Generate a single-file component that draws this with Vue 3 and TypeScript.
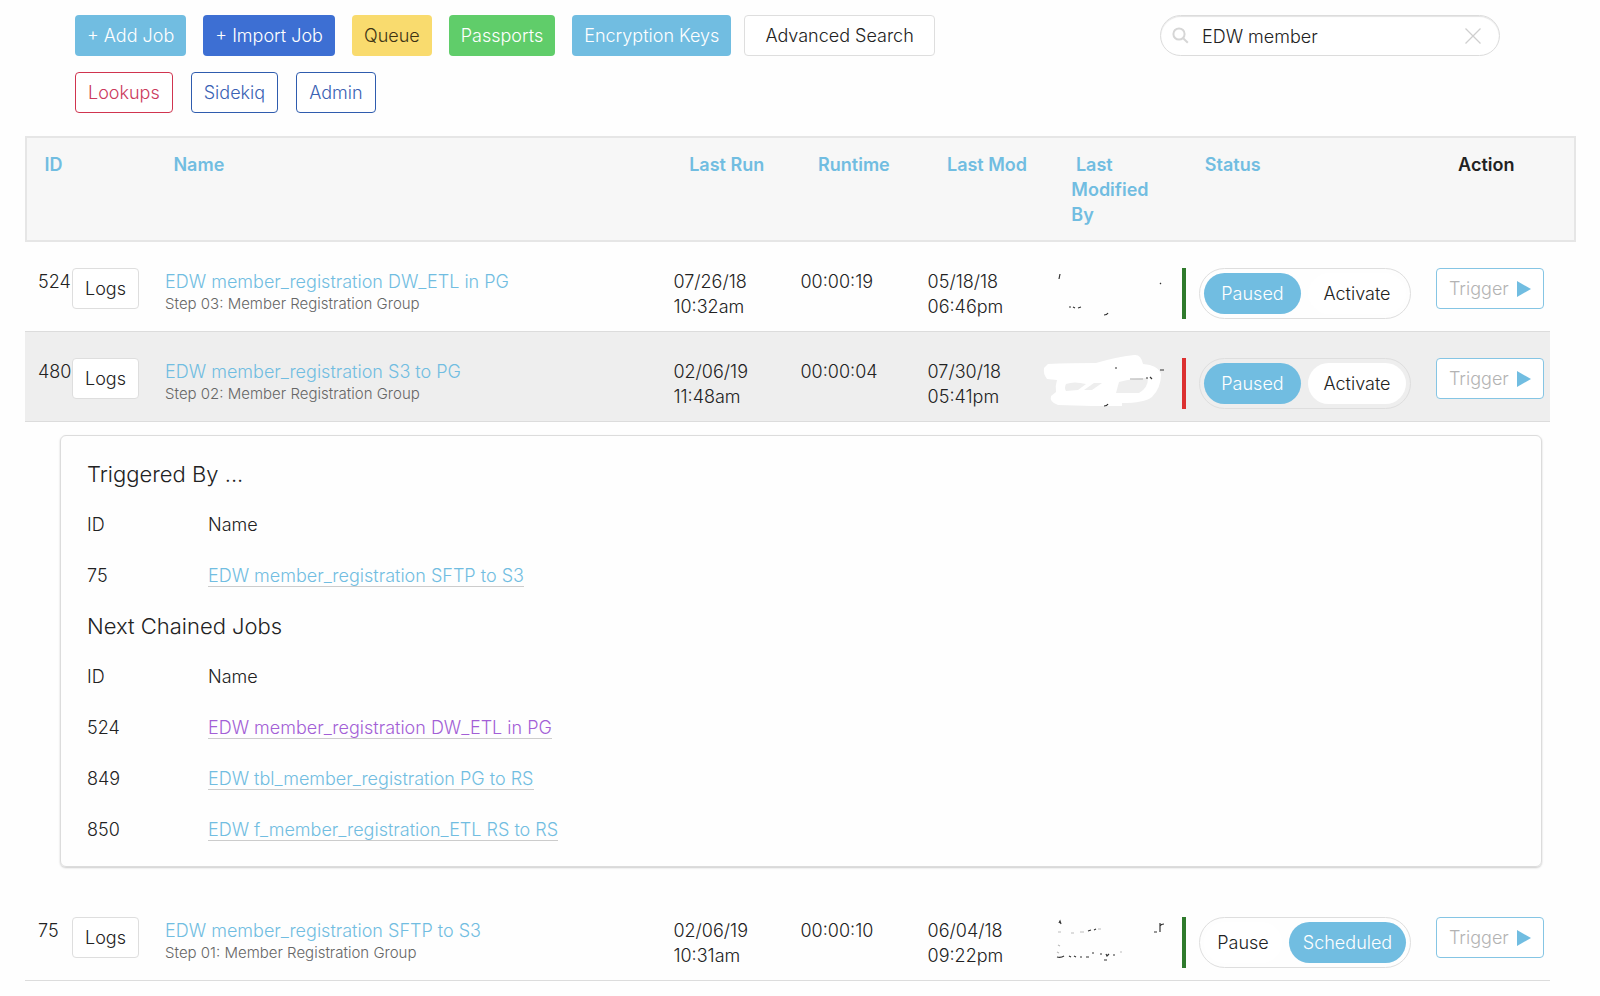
<script setup lang="ts">
import { ref } from 'vue'

interface ToggleOption {
  label: string
  active: boolean
}

interface Job {
  id: number
  name: string
  step: string
  lastRun: [string, string]
  runtime: string
  lastMod: [string, string]
  healthy: boolean
  options: ToggleOption[]
  even: boolean
  expanded: boolean
}

interface LinkedJob {
  id: number
  name: string
  visited?: boolean
}

const query = ref('EDW member')

const primaryActions = [
  { label: '+ Add Job', kind: 'sky' },
  { label: '+ Import Job', kind: 'blue' },
  { label: 'Queue', kind: 'yellow' },
  { label: 'Passports', kind: 'green' },
  { label: 'Encryption Keys', kind: 'sky' },
]

const secondaryActions = [
  { label: 'Lookups', kind: 'outline-red' },
  { label: 'Sidekiq', kind: 'outline-blue' },
  { label: 'Admin', kind: 'outline-blue' },
]

const columns = [
  { label: 'ID', span: 'span-1' },
  { label: 'Name', span: 'span-4' },
  { label: 'Last Run', span: 'span-1' },
  { label: 'Runtime', span: 'span-1' },
  { label: 'Last Mod', span: 'span-1' },
  { label: 'Last Modified By', span: 'span-1' },
  { label: 'Status', span: 'span-2' },
]

const jobs = ref<Job[]>([
  {
    id: 524,
    name: 'EDW member_registration DW_ETL in PG',
    step: 'Step 03: Member Registration Group',
    lastRun: ['07/26/18', '10:32am'],
    runtime: '00:00:19',
    lastMod: ['05/18/18', '06:46pm'],
    healthy: true,
    options: [{ label: 'Paused', active: true }, { label: 'Activate', active: false }],
    even: true,
    expanded: false,
  },
  {
    id: 480,
    name: 'EDW member_registration S3 to PG',
    step: 'Step 02: Member Registration Group',
    lastRun: ['02/06/19', '11:48am'],
    runtime: '00:00:04',
    lastMod: ['07/30/18', '05:41pm'],
    healthy: false,
    options: [{ label: 'Paused', active: true }, { label: 'Activate', active: false }],
    even: true,
    expanded: true,
  },
  {
    id: 75,
    name: 'EDW member_registration SFTP to S3',
    step: 'Step 01: Member Registration Group',
    lastRun: ['02/06/19', '10:31am'],
    runtime: '00:00:10',
    lastMod: ['06/04/18', '09:22pm'],
    healthy: true,
    options: [{ label: 'Pause', active: false }, { label: 'Scheduled', active: true }],
    even: false,
    expanded: false,
  },
])

const groups: { title: string; jobs: LinkedJob[] }[] = [
  { title: 'Triggered By ...', jobs: [{ id: 75, name: 'EDW member_registration SFTP to S3' }] },
  {
    title: 'Next Chained Jobs',
    jobs: [
      { id: 524, name: 'EDW member_registration DW_ETL in PG', visited: true },
      { id: 849, name: 'EDW tbl_member_registration PG to RS' },
      { id: 850, name: 'EDW f_member_registration_ETL RS to RS' },
    ],
  },
]
</script>

<template>
  <main class="page">
    <header class="toolbar">
      <nav class="actions" aria-label="Job tools">
        <div class="action-row">
          <div class="primary-group">
            <button v-for="a in primaryActions" :key="a.label" type="button" class="btn filled" :class="a.kind">{{ a.label }}</button>
          </div>
          <button type="button" class="btn plain wide">Advanced Search</button>
        </div>
        <div class="secondary-group">
          <button v-for="a in secondaryActions" :key="a.label" type="button" class="btn" :class="a.kind">{{ a.label }}</button>
        </div>
      </nav>
      <form class="search" role="search" @submit.prevent>
        <svg class="glass" viewBox="0 0 17 17" aria-hidden="true">
          <circle cx="7" cy="7" r="5.6" />
          <path d="M11.2 11.2 L15.8 15.8" />
        </svg>
        <input v-model="query" type="text" aria-label="Search jobs" />
        <button type="button" class="clear" aria-label="Clear search" @click="query = ''">
          <svg viewBox="0 0 16 16" aria-hidden="true"><path d="M0.5 0.5 L15.5 15.5 M15.5 0.5 L0.5 15.5" /></svg>
        </button>
      </form>
    </header>

    <table class="jobs">
      <thead>
        <tr>
          <th v-for="c in columns" :key="c.label" scope="col" :class="c.span"><a href="#">{{ c.label }}</a></th>
          <th scope="col">Action</th>
        </tr>
      </thead>
      <tbody>
        <template v-for="(job, i) in jobs" :key="job.id">
          <tr class="job" :class="{ selected: job.expanded }">
            <td class="id-cell"><span class="job-id">{{ job.id }}</span><button type="button" class="btn plain logs">Logs</button></td>
            <td class="span-4 text-cell name-cell">
              <a href="#">{{ job.name }}</a>
              <small>{{ job.step }}</small>
            </td>
            <td class="text-cell">{{ job.lastRun[0] }}<br />{{ job.lastRun[1] }}</td>
            <td class="text-cell">{{ job.runtime }}</td>
            <td class="text-cell">{{ job.lastMod[0] }}<br />{{ job.lastMod[1] }}</td>
            <td class="author">
              <svg v-if="i === 0" viewBox="0 0 130 60" aria-hidden="true">
                <path class="ink" d="M20 12 L19 17 M120 21 L121 22 M29 45 L31 45 M33 45 L35 46 M38 46 L41 45 M64 53 Q67 53 68 51" />
              </svg>
              <svg v-else-if="i === 1" viewBox="0 0 130 60" aria-hidden="true">
                <path
                  class="mask"
                  d="M8 12 Q30 11 56 11 Q76 5 94 3 Q101 2 103 12 Q118 13 121 22 Q121 36 112 45 Q104 51 82 51 L82 54 L52 54 L18 53 Q9 50 11 44 L16 40 Q15 34 17 28 L7 27 Q3 22 4 16 Z M26 32 Q34 29 46 32 L38 38 L26 39 Q24 36 26 32 Z M44 38 L54 31 L62 31 L52 38 Z M79 30 Q94 26 108 26 Q108 36 99 41 L76 41 Z"
                />
                <path class="ink" d="M75 16 L77 16 M106 26 L108 26 M110 25 L112 27 M120 18 L124 18 M64 54 Q67 54 68 52" />
                <path class="ink faint" d="M90 27 L103 27" />
              </svg>
              <svg v-else viewBox="0 0 130 60" aria-hidden="true">
                <path class="ink" d="M19 12 L20 10 L21 13 M48 20 L51 19 M54 19 L56 18 M114 21 L117 21 M120 12 L120 21 M120 15 Q121 13 124 13 M17 46 Q21 47 24 45 M29 45 L31 46 M34 45 L36 46 M40 46 L42 46 M46 46 L49 46 M52 42 L54 42 M60 43 L62 43 M66 43 L67 45 L69 43 M64 49 L67 49 M73 44 L75 44" />
                <path class="ink faint" d="M18 21 L21 21 M31 22 L34 22 M40 21 L44 21 M58 18 L61 18 M18 34 L20 35 M17 41 L19 42 M80 41 L82 41" />
              </svg>
            </td>
            <td class="span-2 status">
              <span class="bar" :class="job.healthy ? 'ok' : 'bad'"></span>
              <div class="toggle" :class="{ even: job.even }" role="group" aria-label="Job state">
                <button v-for="o in job.options" :key="o.label" type="button" :class="{ on: o.active }" :aria-pressed="o.active">{{ o.label }}</button>
              </div>
            </td>
            <td class="trigger-cell">
              <button type="button" class="btn trigger">
                Trigger
                <svg viewBox="0 0 14 16" aria-hidden="true"><path d="M0 0 L14 8 L0 16 Z" /></svg>
              </button>
            </td>
          </tr>
          <tr v-if="job.expanded" class="detail">
            <td>
              <section v-for="g in groups" :key="g.title">
                <h2>{{ g.title }}</h2>
                <table class="linked">
                  <thead>
                    <tr><th scope="col">ID</th><th scope="col">Name</th></tr>
                  </thead>
                  <tbody>
                    <tr v-for="l in g.jobs" :key="l.id">
                      <td>{{ l.id }}</td>
                      <td><a href="#" :class="{ visited: l.visited }">{{ l.name }}</a></td>
                    </tr>
                  </tbody>
                </table>
              </section>
            </td>
          </tr>
        </template>
      </tbody>
    </table>
  </main>
</template>

<style>
body {
  margin: 0;
  background: #fefefe;
}
</style>

<style scoped>
.page {
  box-sizing: border-box;
  padding: 15px 24px 0 25px;
  font-family: Inter, "Liberation Sans", sans-serif;
  font-size: 18px;
  font-weight: 300;
  line-height: 25px;
  color: #222;
}

.page *,
.page *::before {
  box-sizing: border-box;
}

button,
input {
  font: inherit;
  color: inherit;
}

a {
  color: #71bde1;
  text-decoration: none;
}

.toolbar {
  display: flex;
  justify-content: space-between;
  align-items: flex-start;
  padding: 0 76px 0 50px;
}

.actions {
  display: flex;
  flex-direction: column;
  gap: 16px;
}

.action-row {
  display: flex;
  gap: 13px;
}

.primary-group {
  display: flex;
  gap: 17px;
}

.secondary-group {
  display: flex;
  gap: 18px;
}

.btn {
  height: 41px;
  padding: 0 12px;
  border: 1px solid transparent;
  border-radius: 4px;
  white-space: nowrap;
  cursor: pointer;
}

.filled {
  padding: 0 11px;
}

.sky {
  background: #71bde1;
  color: #fff;
}

.blue {
  background: #3d6fd3;
  color: #fff;
}

.yellow {
  background: #f9db6e;
  color: #3d3414;
}

.green {
  background: #60cd6a;
  color: #fff;
}

.plain {
  background: #fff;
  border-color: #dedede;
  color: #222;
}

.wide {
  padding: 0 20px;
}

.outline-red {
  background: #fff;
  border-color: #d0344f;
  color: #cb3a5c;
}

.outline-blue {
  background: #fff;
  border-color: #2f5cae;
  color: #3a62b4;
}

.search {
  display: flex;
  align-items: center;
  width: 340px;
  height: 41px;
  padding: 0 18px 0 11px;
  border: 1px solid #dcdcdc;
  border-radius: 21px;
  background: #fff;
  box-shadow: inset 0 1px 1px #e4e4e4;
}

.glass {
  width: 17px;
  height: 17px;
  fill: none;
  stroke: #d6d6d6;
  stroke-width: 2;
}

.search input {
  flex: 1;
  min-width: 0;
  margin-left: 13px;
  padding: 2px 0 0;
  border: 0;
  outline: 0;
  background: none;
}

.clear {
  display: flex;
  padding: 0;
  border: 0;
  background: none;
}

.clear svg {
  width: 16px;
  height: 16px;
  fill: none;
  stroke: #cfcfcf;
  stroke-width: 1.3;
}

.jobs,
.jobs > thead,
.jobs > tbody {
  display: block;
}

.jobs {
  margin-top: 23px;
}

.jobs > thead > tr,
.job {
  display: grid;
  grid-template-columns: repeat(12, minmax(0, 1fr));
}

.jobs > thead > tr {
  padding: 14px 0 13px;
  border: 2px solid #e6e6e6;
  background: #f7f7f7;
}

.jobs > thead th {
  padding: 0 20px 0 13px;
  text-align: left;
  font-weight: 600;
}

.jobs > thead a::before {
  content: "\00a0";
}

.job {
  margin-right: 26px;
  padding: 26px 0 12px;
  border-bottom: 1px solid #dcdcdc;
}

.job td {
  padding: 0 0 0 13px;
}

.job .text-cell {
  padding-top: 1px;
}

.span-4 {
  grid-column: span 4;
}

.span-2 {
  grid-column: span 2;
}

.selected {
  background: #eee;
}

.id-cell {
  display: flex;
}

.job-id {
  width: 34px;
  padding-top: 1px;
}

.logs {
  flex: none;
}

.name-cell a,
.name-cell small {
  display: block;
}

.name-cell small {
  font-size: 15px;
  line-height: 20px;
  color: #666;
}

.author svg {
  display: block;
  width: 130px;
  height: 60px;
  margin: -6px 0 -3px -15px;
}

.mask {
  fill: #fff;
  fill-rule: evenodd;
}

.ink {
  fill: none;
  stroke: #333;
  stroke-width: 1.2;
}

.faint {
  stroke: #bbb;
}

.job .status {
  display: flex;
  gap: 13px;
}

.bar {
  width: 4px;
  height: 51px;
}

.ok {
  background: #2f7a2c;
}

.bad {
  background: #dc3030;
}

.toggle {
  display: flex;
  gap: 7px;
  width: 212px;
  height: 51px;
  padding: 4px;
  border: 1px solid #dedede;
  border-radius: 26px;
}

.toggle button {
  flex: 1 1 auto;
  padding: 0;
  border: 0;
  border-radius: 21px;
  background: #fff;
  color: #222;
}

.toggle.even button {
  flex: 1 1 0;
}

.toggle .on {
  background: #71bde1;
  color: #fff;
}

.trigger {
  display: flex;
  align-items: center;
  gap: 8px;
  background: #fff;
  border-color: #85c5e4;
  color: #b3b3b3;
}

.trigger svg {
  width: 14px;
  height: 16px;
  fill: #71bde1;
}

.detail,
.detail > td {
  display: block;
}

.detail > td {
  margin: 13px 34px 24px 35px;
  padding: 13px 26px 11px;
  border: 1px solid #dcdcdc;
  border-radius: 6px;
  box-shadow: 0 1px 2px #ccc;
}

h2 {
  margin: 0;
  font-size: 22px;
  font-weight: 300;
  line-height: 50px;
}

.linked {
  border-collapse: collapse;
}

.linked th,
.linked td {
  height: 51px;
  padding: 0;
  text-align: left;
  font-weight: 300;
}

.linked th:first-child {
  width: 121px;
}

.linked a {
  border-bottom: 1px solid #ccc;
}

.linked .visited {
  color: #a35fd6;
}
</style>
